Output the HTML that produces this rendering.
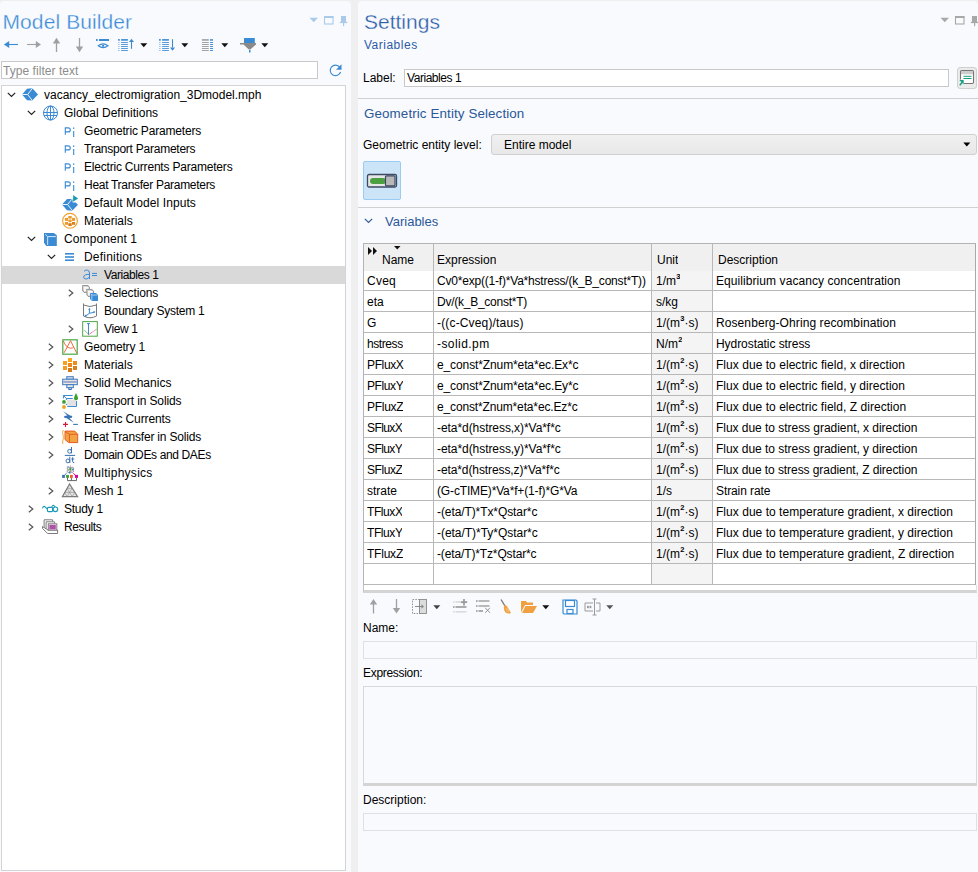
<!DOCTYPE html>
<html><head><meta charset="utf-8"><style>
*{box-sizing:border-box;margin:0;padding:0}
html,body{width:978px;height:872px;overflow:hidden;background:#efefef;font-family:"Liberation Sans",sans-serif;font-size:12px;color:#000}
.a{position:absolute;white-space:pre}
.panel{position:absolute;background:#f9fafd;border-top-left-radius:4px;border-top-right-radius:4px}
.t{position:absolute;white-space:pre;line-height:18px;height:18px}
svg{position:absolute;overflow:visible}
.c{position:absolute;white-space:pre;line-height:20px;height:20px;overflow:hidden}
.sp{position:relative;top:-6px;font-size:7.5px;margin-left:0.3px;font-weight:bold}
</style></head><body>

<!-- LEFT PANEL -->
<div class="panel" style="left:0;top:1px;width:351px;height:871px"></div>
<div class="a" style="left:2.5px;top:7px;font-size:21px;line-height:30px;color:#3b8ad6;letter-spacing:0.1px;-webkit-text-stroke:0.3px #f9fafd">Model Builder</div>
<div class="a" style="left:1px;top:61px;width:317px;height:18px;background:#fff;border:1px solid #c9c9c9"></div>
<div class="a" style="left:3px;top:62px;line-height:18px;color:#8c8c8c;letter-spacing:0.05px">Type filter text</div>
<div class="a" style="left:1px;top:85px;width:345px;height:786px;background:#fff;border:1px solid #d4d4d4"></div>
<div class="a" style="left:2px;top:266px;width:343px;height:18px;background:#d9d9d9"></div>
<svg style="left:7px;top:92px" width="9" height="6" viewBox="0 0 9 6" ><path d="M0.8 0.8 L4.5 4.5 L8.2 0.8" fill="none" stroke="#222" stroke-width="1.2"/></svg>
<svg style="left:22px;top:87px" width="16" height="16" viewBox="0 0 16 16" ><path d="M0 7.5 L5 1.8 L10.3 1.3 L16 7.6 L10.2 13.5 L5 13.2 Z" fill="#3a8ad4"/><path d="M0.3 7.5 L5.7 7.5 L10.5 1.2 M5.7 7.5 L10.3 13.6" stroke="#fff" stroke-width="0.9" fill="none"/></svg>
<div class="t" style="left:44px;top:86px">vacancy_electromigration_3Dmodel.mph</div>
<svg style="left:27px;top:110px" width="9" height="6" viewBox="0 0 9 6" ><path d="M0.8 0.8 L4.5 4.5 L8.2 0.8" fill="none" stroke="#222" stroke-width="1.2"/></svg>
<svg style="left:42px;top:105px" width="16" height="16" viewBox="0 0 16 16" ><g fill="none" stroke="#3a8ad4" stroke-width="1"><circle cx="8.5" cy="8" r="7"/><ellipse cx="8.5" cy="8" rx="3.5" ry="7"/><path d="M8.5 1v14M1.5 7.5h14M2 10.5h13"/></g></svg>
<div class="t" style="left:64px;top:104px">Global Definitions</div>
<svg style="left:62px;top:123px" width="16" height="16" viewBox="0 0 16 16" ><path d="M3.3 11.8 V4.9 H6 Q8.3 4.9 8.3 6.9 Q8.3 8.9 6 8.9 H3.3" fill="none" stroke="#3a8ad4" stroke-width="1.1"/><path d="M11.7 8 V14" stroke="#3a8ad4" stroke-width="1.1"/><rect x="11.15" y="4.4" width="1.1" height="1.6" fill="#3a8ad4"/></svg>
<div class="t" style="left:84px;top:122px;letter-spacing:-0.184px">Geometric Parameters</div>
<svg style="left:62px;top:141px" width="16" height="16" viewBox="0 0 16 16" ><path d="M3.3 11.8 V4.9 H6 Q8.3 4.9 8.3 6.9 Q8.3 8.9 6 8.9 H3.3" fill="none" stroke="#3a8ad4" stroke-width="1.1"/><path d="M11.7 8 V14" stroke="#3a8ad4" stroke-width="1.1"/><rect x="11.15" y="4.4" width="1.1" height="1.6" fill="#3a8ad4"/></svg>
<div class="t" style="left:84px;top:140px;letter-spacing:-0.247px">Transport Parameters</div>
<svg style="left:62px;top:159px" width="16" height="16" viewBox="0 0 16 16" ><path d="M3.3 11.8 V4.9 H6 Q8.3 4.9 8.3 6.9 Q8.3 8.9 6 8.9 H3.3" fill="none" stroke="#3a8ad4" stroke-width="1.1"/><path d="M11.7 8 V14" stroke="#3a8ad4" stroke-width="1.1"/><rect x="11.15" y="4.4" width="1.1" height="1.6" fill="#3a8ad4"/></svg>
<div class="t" style="left:84px;top:158px;letter-spacing:-0.200px">Electric Currents Parameters</div>
<svg style="left:62px;top:177px" width="16" height="16" viewBox="0 0 16 16" ><path d="M3.3 11.8 V4.9 H6 Q8.3 4.9 8.3 6.9 Q8.3 8.9 6 8.9 H3.3" fill="none" stroke="#3a8ad4" stroke-width="1.1"/><path d="M11.7 8 V14" stroke="#3a8ad4" stroke-width="1.1"/><rect x="11.15" y="4.4" width="1.1" height="1.6" fill="#3a8ad4"/></svg>
<div class="t" style="left:84px;top:176px;letter-spacing:-0.291px">Heat Transfer Parameters</div>
<svg style="left:62px;top:195px" width="16" height="16" viewBox="0 0 16 16" ><path d="M0 9.5 L5.1 4 L8.8 4 L10.6 4.6 L10.6 7.6 L13.6 7.6 L16 9.7 L10.2 15.7 L5 15.3 Z" fill="#3a8ad4"/><path d="M0.3 9.5 L5.6 9.5 L9.6 4.5 M5.6 9.5 L10.4 15.7" stroke="#fff" stroke-width="0.9" fill="none"/><path d="M11.1 0 L16.1 3.4 L11.1 6.7 Z" fill="#1a9ab0"/></svg>
<div class="t" style="left:84px;top:194px;letter-spacing:0.095px">Default Model Inputs</div>
<svg style="left:62px;top:213px" width="16" height="16" viewBox="0 0 16 16" ><circle cx="8" cy="7.8" r="7.4" fill="none" stroke="#f0a030" stroke-width="1.1"/><g fill="#ee9a2a"><rect x="6.3" y="3" width="3.4" height="2.6"/><rect x="2.9" y="4.9" width="3.1" height="3"/><rect x="10" y="4.9" width="3.1" height="3"/><rect x="6.3" y="6.6" width="3.4" height="2.6" rx="1"/><rect x="2.9" y="9" width="3.1" height="2.8"/></g><rect x="10" y="9" width="3.1" height="2.8" fill="#dc8018"/><rect x="6.3" y="10.2" width="3.4" height="2.9" fill="#d87a14"/></svg>
<div class="t" style="left:84px;top:212px">Materials</div>
<svg style="left:27px;top:236px" width="9" height="6" viewBox="0 0 9 6" ><path d="M0.8 0.8 L4.5 4.5 L8.2 0.8" fill="none" stroke="#222" stroke-width="1.2"/></svg>
<svg style="left:42px;top:231px" width="16" height="16" viewBox="0 0 16 16" ><path d="M2 1.9 L11.8 1.9 L14.8 4.2 L14.8 14.9 L4.3 14.9 L2 11.8 Z" fill="#3a8ad4"/><path d="M3.3 3.2 L5.65 5.6 L13.9 5.6 M5.65 5.6 L5.65 13.9" stroke="#e8eef8" stroke-width="0.9" fill="none"/></svg>
<div class="t" style="left:64px;top:230px;letter-spacing:0.100px">Component 1</div>
<svg style="left:47px;top:254px" width="9" height="6" viewBox="0 0 9 6" ><path d="M0.8 0.8 L4.5 4.5 L8.2 0.8" fill="none" stroke="#222" stroke-width="1.2"/></svg>
<svg style="left:62px;top:249px" width="16" height="16" viewBox="0 0 16 16" ><g fill="#3a8ad4"><rect x="3" y="4" width="9" height="1.6"/><rect x="3" y="7.2" width="9" height="1.6"/><rect x="3" y="10.4" width="9" height="1.6"/></g></svg>
<div class="t" style="left:84px;top:248px;letter-spacing:0.200px">Definitions</div>
<svg style="left:82px;top:267px" width="16" height="16" viewBox="0 0 16 16" ><path d="M2 4.3 Q3.5 2.9 5.3 3.1 Q7.5 3.4 7.5 6 V12" fill="none" stroke="#3a8ad4" stroke-width="1"/><path d="M7.4 7.4 Q2.3 7.2 1.6 9.8 Q1.6 12.1 4.2 12 Q6.6 11.9 7.4 9.8" fill="none" stroke="#3a8ad4" stroke-width="1"/><path d="M10 6.4 h5 M10 8.5 h5" stroke="#3a8ad4" stroke-width="1"/></svg>
<div class="t" style="left:104px;top:266px;letter-spacing:-0.420px">Variables 1</div>
<svg style="left:68px;top:289px" width="6" height="8" viewBox="0 0 6 8" ><path d="M0.8 0.8 L4.8 4 L0.8 7.2" fill="none" stroke="#555" stroke-width="1.2"/></svg>
<svg style="left:82px;top:285px" width="16" height="16" viewBox="0 0 16 16" ><g transform="translate(0,0)"><path d="M0.7 0.7 L5.6 0.7 L7.3 2.4 L7.3 7.3 L2.4 7.3 L0.7 5.6 Z" fill="#eeeeee" stroke="#999" stroke-width="1.2"/><path d="M1.5 1.5 L2.6 2.6 L6.8 2.6 M2.6 2.6 L2.6 6.8" stroke="#fff" stroke-width="0.7" fill="none"/></g><g transform="translate(4.2,4)"><path d="M0.7 0.7 L5.6 0.7 L7.3 2.4 L7.3 7.3 L2.4 7.3 L0.7 5.6 Z" fill="#eeeeee" stroke="#999" stroke-width="1.2"/><path d="M1.5 1.5 L2.6 2.6 L6.8 2.6 M2.6 2.6 L2.6 6.8" stroke="#fff" stroke-width="0.7" fill="none"/></g><path d="M8 8 L14 8 L16 10 L16 16 L10 16 L8 14 Z" fill="#3a8ad4"/><path d="M8.6 8.6 L9.8 10 L15.5 10 M9.8 10 L9.8 15.6" stroke="#c8dcf4" stroke-width="0.8" fill="none"/></svg>
<div class="t" style="left:104px;top:284px;letter-spacing:-0.111px">Selections</div>
<svg style="left:82px;top:303px" width="16" height="16" viewBox="0 0 16 16" ><path d="M1.5 0.5 V13 Q8 16.6 14.5 13 V0.5" fill="none" stroke="#7a7a7a" stroke-width="1"/><path d="M1.5 2 Q8 5 14.5 2" fill="none" stroke="#7a7a7a" stroke-width="1"/><path d="M7.4 6 V10.3 L12.5 9.2 M7.4 10.3 L3.6 13" fill="none" stroke="#3a8ad4" stroke-width="1"/><path d="M6.2 6.8 L7.4 4.8 L8.6 6.8Z M11.2 8 L13.5 8.7 L11.9 10.3Z M2.8 11.2 L3 14 L5.4 13Z" fill="#3a8ad4"/></svg>
<div class="t" style="left:104px;top:302px;letter-spacing:-0.250px">Boundary System 1</div>
<svg style="left:68px;top:325px" width="6" height="8" viewBox="0 0 6 8" ><path d="M0.8 0.8 L4.8 4 L0.8 7.2" fill="none" stroke="#555" stroke-width="1.2"/></svg>
<svg style="left:82px;top:321px" width="16" height="16" viewBox="0 0 16 16" ><rect x="0.7" y="0.6" width="14.6" height="14.6" fill="none" stroke="#4aa844" stroke-width="1"/><path d="M6.5 2.5 V13.8 M5 2.6 h3" stroke="#3a8ad4" stroke-width="1"/><path d="M6.7 13.6 L14.5 8.2" stroke="#e0407a" stroke-width="0.9" stroke-dasharray="1 0.5"/><path d="M2.3 9 L6.5 13.5" stroke="#4aa844" stroke-width="0.9" stroke-dasharray="1 0.5"/></svg>
<div class="t" style="left:104px;top:320px;letter-spacing:-0.400px">View 1</div>
<svg style="left:48px;top:343px" width="6" height="8" viewBox="0 0 6 8" ><path d="M0.8 0.8 L4.8 4 L0.8 7.2" fill="none" stroke="#555" stroke-width="1.2"/></svg>
<svg style="left:62px;top:339px" width="16" height="16" viewBox="0 0 16 16" ><rect x="0.8" y="0.8" width="14.4" height="14.4" fill="none" stroke="#4aa844" stroke-width="1.2"/><path d="M2.1 13.8 L8.55 1.7 L14.7 14" fill="none" stroke="#e85a2a" stroke-width="0.9"/><path d="M1.4 1.9 Q3.5 8.2 8.3 9.2 Q10.3 9.4 11.5 8.2" fill="none" stroke="#e85a2a" stroke-width="0.9"/></svg>
<div class="t" style="left:84px;top:338px;letter-spacing:-0.178px">Geometry 1</div>
<svg style="left:48px;top:361px" width="6" height="8" viewBox="0 0 6 8" ><path d="M0.8 0.8 L4.8 4 L0.8 7.2" fill="none" stroke="#555" stroke-width="1.2"/></svg>
<svg style="left:62px;top:357px" width="16" height="16" viewBox="0 0 16 16" ><rect x="6" y="1" width="4" height="4" fill="#f8a81c"/><rect x="1" y="4" width="4" height="4" fill="#f8a01c"/><rect x="11" y="4" width="4" height="4" fill="#ee8c1c"/><rect x="6" y="6" width="4" height="4" fill="#ef8a1a"/><rect x="1" y="9" width="4" height="4" fill="#f39a25"/><rect x="11" y="9" width="4" height="4" fill="#d98020"/><rect x="6" y="11" width="4" height="4" fill="#d57a1a"/></svg>
<div class="t" style="left:84px;top:356px">Materials</div>
<svg style="left:48px;top:379px" width="6" height="8" viewBox="0 0 6 8" ><path d="M0.8 0.8 L4.8 4 L0.8 7.2" fill="none" stroke="#555" stroke-width="1.2"/></svg>
<svg style="left:62px;top:375px" width="16" height="16" viewBox="0 0 16 16" ><g fill="#ece8e4" stroke="#3a78c0" stroke-width="1"><rect x="4.8" y="1.7" width="6.5" height="2.5"/><rect x="0.7" y="4.2" width="14.6" height="5.5"/><rect x="4.8" y="9.7" width="6.5" height="3"/><rect x="6.8" y="12.7" width="2.5" height="1.8"/></g><rect x="1.2" y="5.9" width="13.6" height="2" fill="#9aaad0"/></svg>
<div class="t" style="left:84px;top:374px">Solid Mechanics</div>
<svg style="left:48px;top:397px" width="6" height="8" viewBox="0 0 6 8" ><path d="M0.8 0.8 L4.8 4 L0.8 7.2" fill="none" stroke="#555" stroke-width="1.2"/></svg>
<svg style="left:62px;top:393px" width="16" height="16" viewBox="0 0 16 16" ><rect x="5.1" y="6.5" width="8.9" height="6.4" fill="#e2e2e2"/><path d="M1.4 5.5 V2.5 H10.7 M1.6 2.6 L4.4 5.5 H10.7 M4.4 5.5 V7 M14.5 8 V13.5 H5.3" fill="none" stroke="#3a8ad4" stroke-width="1"/><circle cx="4.5" cy="11.4" r="0.7" fill="#3a8ad4"/><circle cx="2" cy="8.9" r="1.9" fill="#3aa030"/><circle cx="2" cy="14" r="1.9" fill="#f0a020"/><path d="M14 0 Q16 3.8 16 5.2 A2 2 0 0 1 12 5.2 Q12 3.8 14 0Z" fill="#3aa030"/></svg>
<div class="t" style="left:84px;top:392px;letter-spacing:-0.111px">Transport in Solids</div>
<svg style="left:48px;top:415px" width="6" height="8" viewBox="0 0 6 8" ><path d="M0.8 0.8 L4.8 4 L0.8 7.2" fill="none" stroke="#555" stroke-width="1.2"/></svg>
<svg style="left:62px;top:411px" width="16" height="16" viewBox="0 0 16 16" ><path d="M1.3 0.2 L7.5 4.3 L10.2 5 L10 6.7 L7.5 7 L11.8 11.7 L4.8 7.2 L2.3 6.7 L2.2 4.9 L5.3 4.6 Z" fill="#3a74b8"/><path d="M1 13.4 h5 M3.5 10.9 v5" stroke="#d0183c" stroke-width="1.1"/><path d="M11.2 13.4 h4.7" stroke="#3a74b8" stroke-width="1.1"/></svg>
<div class="t" style="left:84px;top:410px;letter-spacing:-0.125px">Electric Currents</div>
<svg style="left:48px;top:433px" width="6" height="8" viewBox="0 0 6 8" ><path d="M0.8 0.8 L4.8 4 L0.8 7.2" fill="none" stroke="#555" stroke-width="1.2"/></svg>
<svg style="left:62px;top:429px" width="16" height="16" viewBox="0 0 16 16" ><path d="M1.3 1 Q0 3.5 1 6 Q2 8.5 1 11 Q0.4 13 0.8 15" fill="none" stroke="#f0a030" stroke-width="0.9"/><path d="M3 2.1 L12.7 2.1 L15.7 5.3 V13.6 H6.7 L3 10.6 Z" fill="#f0a444" stroke="#e85a20" stroke-width="1"/><path d="M3.5 2.6 L7.4 5.3 H15.5 M7.4 5.3 V13.4" fill="none" stroke="#e85a20" stroke-width="1"/></svg>
<div class="t" style="left:84px;top:428px;letter-spacing:-0.191px">Heat Transfer in Solids</div>
<svg style="left:48px;top:451px" width="6" height="8" viewBox="0 0 6 8" ><path d="M0.8 0.8 L4.8 4 L0.8 7.2" fill="none" stroke="#555" stroke-width="1.2"/></svg>
<svg style="left:62px;top:447px" width="16" height="16" viewBox="0 0 16 16" ><g fill="none" stroke="#3a6fb0" stroke-width="1"><circle cx="7.6" cy="4.3" r="1.9"/><path d="M9.5 0 V6.3"/><path d="M2.8 8.4 H13.1"/><circle cx="5.9" cy="13.9" r="1.9"/><path d="M7.8 9.7 V15.9"/><path d="M10.6 10.3 V14.6 Q10.6 15.6 12.2 15.6 M9.3 12 H12.2"/></g></svg>
<div class="t" style="left:84px;top:446px;letter-spacing:-0.363px">Domain ODEs and DAEs</div>
<svg style="left:62px;top:465px" width="16" height="16" viewBox="0 0 16 16" ><g fill="none" stroke="#9a9a9a" stroke-width="0.9"><ellipse cx="8.3" cy="4.8" rx="3.8" ry="1.6" transform="rotate(35 8.3 4.8)"/><ellipse cx="8.3" cy="4.8" rx="3.8" ry="1.6" transform="rotate(-35 8.3 4.8)"/><path d="M8.3 0.5 V8.5"/></g><circle cx="8.3" cy="4.3" r="1.1" fill="#3aa030"/><circle cx="6" cy="1.8" r="0.9" fill="#7aaee0"/><circle cx="11" cy="4.3" r="0.9" fill="#3a78c0"/><circle cx="7.5" cy="7.6" r="0.9" fill="#3a78c0"/><path d="M2.6 10 L4.6 8.2" stroke="#3a70b8" stroke-width="1"/><path d="M11.4 8.2 L13.5 10.3" stroke="#e000a0" stroke-width="1"/><rect x="0.1" y="9.9" width="2.8" height="3" fill="#3a70b8"/><rect x="4.1" y="9.9" width="2.8" height="3" fill="#3aa030"/><rect x="8" y="9.9" width="2.8" height="3" fill="#e86030"/><rect x="13" y="9.9" width="3" height="3" fill="#e000a0"/><path d="M5.5 12.9 V15.6 H14.5 V12.9 M9.4 12.9 V15.6" fill="none" stroke="#666" stroke-width="1"/></svg>
<div class="t" style="left:84px;top:464px;letter-spacing:0.273px">Multiphysics</div>
<svg style="left:48px;top:487px" width="6" height="8" viewBox="0 0 6 8" ><path d="M0.8 0.8 L4.8 4 L0.8 7.2" fill="none" stroke="#555" stroke-width="1.2"/></svg>
<svg style="left:62px;top:483px" width="16" height="16" viewBox="0 0 16 16" ><path d="M7.6 1 L15.6 13.6 L0.4 13.6 Z" fill="#e6e6e6" stroke="#7a7a7a" stroke-width="1.2"/><path d="M5 5.3 H10.2 M2.6 9.4 H12.8 M5 5.3 L7.6 9.4 L10.2 5.3 M2.6 9.4 L5.2 13.5 L7.6 9.4 L10.1 13.5 L12.8 9.4" fill="none" stroke="#8a8a8a" stroke-width="0.6"/></svg>
<div class="t" style="left:84px;top:482px">Mesh 1</div>
<svg style="left:28px;top:505px" width="6" height="8" viewBox="0 0 6 8" ><path d="M0.8 0.8 L4.8 4 L0.8 7.2" fill="none" stroke="#555" stroke-width="1.2"/></svg>
<svg style="left:42px;top:501px" width="16" height="16" viewBox="0 0 16 16" ><g fill="none" stroke="#1a9ab4" stroke-width="1.1"><path d="M0.4 7.4 Q1.6 4.3 3.2 6 Q4.2 7.4 5.4 8"/><rect x="5.4" y="6.4" width="5.2" height="4.2" rx="1"/><circle cx="13.4" cy="8.3" r="2.3"/><path d="M9.8 6.3 Q10 4.2 11.6 4.3 L13.2 5.9"/></g></svg>
<div class="t" style="left:64px;top:500px;letter-spacing:-0.267px">Study 1</div>
<svg style="left:28px;top:523px" width="6" height="8" viewBox="0 0 6 8" ><path d="M0.8 0.8 L4.8 4 L0.8 7.2" fill="none" stroke="#555" stroke-width="1.2"/></svg>
<svg style="left:42px;top:519px" width="16" height="16" viewBox="0 0 16 16" ><g fill="#fff" stroke="#7a7a7a" stroke-width="1"><path d="M2.1 9 V0.8 H10.6 V2.5"/><path d="M4.1 10 V2.8 H12.6 V4.6"/><path d="M0.5 7.5 V9.5 L5.7 14.5 H15.6 V11 H6 Z"/><rect x="6.3" y="4.8" width="8.5" height="6.3"/></g><rect x="7.3" y="5.8" width="6.5" height="4.6" fill="#b050a8"/></svg>
<div class="t" style="left:64px;top:518px;letter-spacing:-0.367px">Results</div>

<!-- RIGHT PANEL -->
<div class="panel" style="left:358px;top:1px;width:620px;height:871px"></div>
<div class="a" style="left:364px;top:7px;font-size:21px;line-height:30px;color:#2b5ca8;-webkit-text-stroke:0.3px #f9fafd">Settings</div>
<div class="a" style="left:364px;top:36px;line-height:18px;color:#2b5ca8;letter-spacing:0.5px">Variables</div>

<div class="a" style="left:363px;top:69px;line-height:18px">Label:</div>
<div class="a" style="left:404px;top:69px;width:545px;height:18px;background:#fff;border:1px solid #c8c8c8"></div>
<div class="a" style="left:407px;top:69px;line-height:18px;letter-spacing:-0.45px">Variables 1</div>
<div class="a" style="left:358px;top:98px;width:620px;height:1px;background:#d0d0d0"></div>

<div class="a" style="left:364px;top:105px;font-size:13.4px;line-height:18px;color:#2a5898;letter-spacing:0.1px">Geometric Entity Selection</div>
<div class="a" style="left:363px;top:136px;line-height:18px">Geometric entity level:</div>
<div class="a" style="left:491px;top:134px;width:486px;height:21px;background:linear-gradient(#f0f0f0,#e8e8e8);border:1px solid #cfcfcf;border-radius:3px"></div>
<div class="a" style="left:504px;top:136px;line-height:18px">Entire model</div>
<div class="a" style="left:363px;top:161px;width:38px;height:39px;background:#cce4f7;border:1px solid #99ccf5;border-radius:2px"></div>
<div class="a" style="left:358px;top:207px;width:620px;height:1px;background:#d0d0d0"></div>
<div class="a" style="left:385px;top:213px;font-size:13px;line-height:18px;color:#2a5898">Variables</div>

<div class="a" style="left:363px;top:585px;width:614px;height:8px;background:#fff;border:1px solid #e2e2e2;border-left-color:#c0c0c0;border-top:0;border-bottom:3px solid #d4d4d4"></div>
<div class="a" style="left:363px;top:243px;width:613px;height:342px;background:#fff;border:1px solid #b4b4b4;border-right-color:#a8a8a8;border-bottom:0"></div>
<div class="a" style="left:364px;top:244px;width:611px;height:27px;background:#f0f0f0"></div>
<div class="a" style="left:652px;top:271px;width:60px;height:313px;background:#f4f4f4"></div>
<div class="a" style="left:364px;top:290px;width:611px;height:1px;background:#b8b8b8"></div>
<div class="a" style="left:364px;top:311px;width:611px;height:1px;background:#b8b8b8"></div>
<div class="a" style="left:364px;top:332px;width:611px;height:1px;background:#b8b8b8"></div>
<div class="a" style="left:364px;top:353px;width:611px;height:1px;background:#b8b8b8"></div>
<div class="a" style="left:364px;top:374px;width:611px;height:1px;background:#b8b8b8"></div>
<div class="a" style="left:364px;top:395px;width:611px;height:1px;background:#b8b8b8"></div>
<div class="a" style="left:364px;top:416px;width:611px;height:1px;background:#b8b8b8"></div>
<div class="a" style="left:364px;top:437px;width:611px;height:1px;background:#b8b8b8"></div>
<div class="a" style="left:364px;top:458px;width:611px;height:1px;background:#b8b8b8"></div>
<div class="a" style="left:364px;top:479px;width:611px;height:1px;background:#b8b8b8"></div>
<div class="a" style="left:364px;top:500px;width:611px;height:1px;background:#b8b8b8"></div>
<div class="a" style="left:364px;top:521px;width:611px;height:1px;background:#b8b8b8"></div>
<div class="a" style="left:364px;top:542px;width:611px;height:1px;background:#b8b8b8"></div>
<div class="a" style="left:364px;top:563px;width:611px;height:1px;background:#b8b8b8"></div>
<div class="a" style="left:364px;top:584px;width:611px;height:1px;background:#b8b8b8"></div>
<div class="a" style="left:433px;top:244px;width:1px;height:340px;background:#b8b8b8"></div>
<div class="a" style="left:651px;top:244px;width:1px;height:340px;background:#b8b8b8"></div>
<div class="a" style="left:712px;top:244px;width:1px;height:340px;background:#b8b8b8"></div>
<div class="c" style="left:382px;top:250px">Name</div>
<div class="c" style="left:437px;top:250px">Expression</div>
<div class="c" style="left:657px;top:250px">Unit</div>
<div class="c" style="left:718px;top:250px">Description</div>
<svg style="left:368px;top:247px" width="10" height="8" viewBox="0 0 10 8" ><path d="M0 0 L4 4 L0 8Z M5 0 L9 4 L5 8Z" fill="#111"/></svg>
<svg style="left:394px;top:246px" width="7" height="4" viewBox="0 0 7 4" ><path d="M0 0 L6.5 0 L3.25 3.5Z" fill="#111"/></svg>
<div class="c" style="left:367px;top:271px;letter-spacing:0.233px">Cveq</div>
<div class="c" style="left:437px;top:271px;width:213px;letter-spacing:-0.200px">Cv0*exp((1-f)*Va*hstress/(k_B_const*T))</div>
<div class="c" style="left:656px;top:271px">1/m<span class="sp">3</span></div>
<div class="c" style="left:716px;top:271px;width:258px;letter-spacing:0.075px">Equilibrium vacancy concentration</div>
<div class="c" style="left:367px;top:292px">eta</div>
<div class="c" style="left:437px;top:292px;width:213px;letter-spacing:-0.253px">Dv/(k_B_const*T)</div>
<div class="c" style="left:656px;top:292px">s/kg</div>
<div class="c" style="left:716px;top:292px;width:258px"></div>
<div class="c" style="left:367px;top:313px">G</div>
<div class="c" style="left:437px;top:313px;width:213px;letter-spacing:0.160px">-((c-Cveq)/taus)</div>
<div class="c" style="left:656px;top:313px">1/(m<span class="sp">3</span>·s)</div>
<div class="c" style="left:716px;top:313px;width:258px;letter-spacing:0.090px">Rosenberg-Ohring recombination</div>
<div class="c" style="left:367px;top:334px;letter-spacing:-0.417px">hstress</div>
<div class="c" style="left:437px;top:334px;width:213px;letter-spacing:0.438px">-solid.pm</div>
<div class="c" style="left:656px;top:334px">N/m<span class="sp">2</span></div>
<div class="c" style="left:716px;top:334px;width:258px;letter-spacing:-0.059px">Hydrostatic stress</div>
<div class="c" style="left:367px;top:355px;letter-spacing:-0.360px">PFluxX</div>
<div class="c" style="left:437px;top:355px;width:213px;letter-spacing:-0.113px">e_const*Znum*eta*ec.Ex*c</div>
<div class="c" style="left:656px;top:355px">1/(m<span class="sp">2</span>·s)</div>
<div class="c" style="left:716px;top:355px;width:258px;letter-spacing:0.042px">Flux due to electric field, x direction</div>
<div class="c" style="left:367px;top:376px;letter-spacing:-0.400px">PFluxY</div>
<div class="c" style="left:437px;top:376px;width:213px;letter-spacing:-0.113px">e_const*Znum*eta*ec.Ey*c</div>
<div class="c" style="left:656px;top:376px">1/(m<span class="sp">2</span>·s)</div>
<div class="c" style="left:716px;top:376px;width:258px;letter-spacing:0.042px">Flux due to electric field, y direction</div>
<div class="c" style="left:367px;top:397px;letter-spacing:-0.280px">PFluxZ</div>
<div class="c" style="left:437px;top:397px;width:213px;letter-spacing:-0.148px">e_const*Znum*eta*ec.Ez*c</div>
<div class="c" style="left:656px;top:397px">1/(m<span class="sp">2</span>·s)</div>
<div class="c" style="left:716px;top:397px;width:258px;letter-spacing:0.037px">Flux due to electric field, Z direction</div>
<div class="c" style="left:367px;top:418px;letter-spacing:-0.600px">SFluxX</div>
<div class="c" style="left:437px;top:418px;width:213px;letter-spacing:-0.061px">-eta*d(hstress,x)*Va*f*c</div>
<div class="c" style="left:656px;top:418px">1/(m<span class="sp">2</span>·s)</div>
<div class="c" style="left:716px;top:418px;width:258px;letter-spacing:-0.036px">Flux due to stress gradient, x direction</div>
<div class="c" style="left:367px;top:439px;letter-spacing:-0.600px">SFluxY</div>
<div class="c" style="left:437px;top:439px;width:213px;letter-spacing:-0.061px">-eta*d(hstress,y)*Va*f*c</div>
<div class="c" style="left:656px;top:439px">1/(m<span class="sp">2</span>·s)</div>
<div class="c" style="left:716px;top:439px;width:258px;letter-spacing:-0.036px">Flux due to stress gradient, y direction</div>
<div class="c" style="left:367px;top:460px;letter-spacing:-0.420px">SFluxZ</div>
<div class="c" style="left:437px;top:460px;width:213px;letter-spacing:-0.100px">-eta*d(hstress,z)*Va*f*c</div>
<div class="c" style="left:656px;top:460px">1/(m<span class="sp">2</span>·s)</div>
<div class="c" style="left:716px;top:460px;width:258px;letter-spacing:-0.067px">Flux due to stress gradient, Z direction</div>
<div class="c" style="left:367px;top:481px">strate</div>
<div class="c" style="left:437px;top:481px;width:213px;letter-spacing:-0.150px">(G-cTIME)*Va*f+(1-f)*G*Va</div>
<div class="c" style="left:656px;top:481px">1/s</div>
<div class="c" style="left:716px;top:481px;width:258px;letter-spacing:-0.100px">Strain rate</div>
<div class="c" style="left:367px;top:502px;letter-spacing:-0.420px">TFluxX</div>
<div class="c" style="left:437px;top:502px;width:213px;letter-spacing:-0.089px">-(eta/T)*Tx*Qstar*c</div>
<div class="c" style="left:656px;top:502px">1/(m<span class="sp">2</span>·s)</div>
<div class="c" style="left:716px;top:502px;width:258px;letter-spacing:0.034px">Flux due to temperature gradient, x direction</div>
<div class="c" style="left:367px;top:523px;letter-spacing:-0.420px">TFluxY</div>
<div class="c" style="left:437px;top:523px;width:213px;letter-spacing:-0.033px">-(eta/T)*Ty*Qstar*c</div>
<div class="c" style="left:656px;top:523px">1/(m<span class="sp">2</span>·s)</div>
<div class="c" style="left:716px;top:523px;width:258px;letter-spacing:0.034px">Flux due to temperature gradient, y direction</div>
<div class="c" style="left:367px;top:544px;letter-spacing:-0.220px">TFluxZ</div>
<div class="c" style="left:437px;top:544px;width:213px;letter-spacing:-0.133px">-(eta/T)*Tz*Qstar*c</div>
<div class="c" style="left:656px;top:544px">1/(m<span class="sp">2</span>·s)</div>
<div class="c" style="left:716px;top:544px;width:258px;letter-spacing:0.034px">Flux due to temperature gradient, Z direction</div>
<svg style="left:309px;top:17px" width="10" height="6" viewBox="0 0 10 6" ><path d="M0.5 0.8 L9 0.8 L4.75 5.2Z" fill="#a9cbe9"/></svg>
<svg style="left:323px;top:15px" width="11" height="10" viewBox="0 0 11 10" ><rect x="1.5" y="2" width="8.5" height="7" fill="none" stroke="#a9cbe9" stroke-width="1.1"/><rect x="1" y="1" width="9.5" height="2" fill="#a9cbe9"/></svg>
<svg style="left:339px;top:15px" width="9" height="12" viewBox="0 0 9 12" ><rect x="2" y="1" width="5" height="6.5" fill="#a9cbe9"/><rect x="0.8" y="6.8" width="7.5" height="1.3" fill="#a9cbe9"/><rect x="4" y="8" width="1.2" height="3.2" fill="#a9cbe9"/></svg>
<svg style="left:940px;top:17px" width="10" height="6" viewBox="0 0 10 6" ><path d="M0.5 0.8 L9 0.8 L4.75 5.2Z" fill="#a8a8a8"/></svg>
<svg style="left:954px;top:15px" width="11" height="10" viewBox="0 0 11 10" ><rect x="1.5" y="2" width="8.5" height="7" fill="none" stroke="#a8a8a8" stroke-width="1.1"/><rect x="1" y="1" width="9.5" height="2" fill="#a8a8a8"/></svg>
<svg style="left:970px;top:15px" width="9" height="12" viewBox="0 0 9 12" ><rect x="2" y="1" width="5" height="6.5" fill="#a8a8a8"/><rect x="0.8" y="6.8" width="7.5" height="1.3" fill="#a8a8a8"/><rect x="4" y="8" width="1.2" height="3.2" fill="#a8a8a8"/></svg>
<svg style="left:3px;top:37px" width="16" height="14" viewBox="0 0 16 14" ><path d="M5 7.5 L15 7.5" stroke="#3a8ad4" stroke-width="1.1"/><path d="M0.9 7.5 L6.2 4 L6.2 11Z" fill="#3a8ad4"/></svg>
<svg style="left:26px;top:37px" width="16" height="14" viewBox="0 0 16 14" ><path d="M1 7.5 L11 7.5" stroke="#a0a0a0" stroke-width="1.1"/><path d="M15 7.5 L9.8 4 L9.8 11Z" fill="#a0a0a0"/></svg>
<svg style="left:52px;top:37px" width="9" height="16" viewBox="0 0 9 16" ><path d="M4.5 4 L4.5 15" stroke="#a0a0a0" stroke-width="1.3"/><path d="M4.5 0.8 L8.2 6.5 L0.8 6.5Z" fill="#a0a0a0"/></svg>
<svg style="left:75px;top:37px" width="9" height="16" viewBox="0 0 9 16" ><path d="M4.5 1 L4.5 12" stroke="#a0a0a0" stroke-width="1.3"/><path d="M4.5 15.2 L8.2 9.5 L0.8 9.5Z" fill="#a0a0a0"/></svg>
<svg style="left:95px;top:37px" width="15" height="12" viewBox="0 0 15 12" ><rect x="1" y="2" width="1.6" height="2" fill="#3a8ad4"/><rect x="4" y="2" width="10" height="2" fill="#3a8ad4"/><path d="M3.3 8.8 Q8.1 5 12.9 8.8 Q8.1 12.5 3.3 8.8Z" fill="none" stroke="#3a8ad4" stroke-width="1.2"/><circle cx="8.1" cy="8.8" r="1.1" fill="#3a8ad4"/></svg>
<svg style="left:117px;top:38px" width="17" height="14" viewBox="0 0 17 14" ><rect x="1" y="1.1" width="1.8" height="1.6" fill="#3a8ad4"/><rect x="4.1" y="1.1" width="6.8" height="1.6" fill="#3a8ad4"/><rect x="1.4" y="4.1" width="1" height="0.9" fill="#5a9ad8"/><rect x="4.1" y="4.1" width="6.8" height="0.9" fill="#4a92d6"/><rect x="1.4" y="6.1" width="1" height="0.9" fill="#5a9ad8"/><rect x="4.1" y="6.1" width="6.8" height="0.9" fill="#4a92d6"/><rect x="1.4" y="8.1" width="1" height="0.9" fill="#5a9ad8"/><rect x="4.1" y="8.1" width="6.8" height="0.9" fill="#4a92d6"/><rect x="1.4" y="10.1" width="1" height="0.9" fill="#5a9ad8"/><rect x="4.1" y="10.1" width="6.8" height="0.9" fill="#4a92d6"/><rect x="1.4" y="12.1" width="1" height="0.9" fill="#5a9ad8"/><rect x="4.1" y="12.1" width="6.8" height="0.9" fill="#4a92d6"/><path d="M14.5 3.5 L14.5 10.8" stroke="#3a8ad4" stroke-width="1.1"/><path d="M14.5 0.8 L17 4 L12 4Z" fill="#3a8ad4"/></svg>
<svg style="left:158px;top:38px" width="17" height="14" viewBox="0 0 17 14" ><rect x="1" y="1.1" width="1.8" height="1.6" fill="#3a8ad4"/><rect x="4.1" y="1.1" width="6.8" height="1.6" fill="#3a8ad4"/><rect x="1.4" y="4.1" width="1" height="0.9" fill="#5a9ad8"/><rect x="4.1" y="4.1" width="6.8" height="0.9" fill="#4a92d6"/><rect x="1.4" y="6.1" width="1" height="0.9" fill="#5a9ad8"/><rect x="4.1" y="6.1" width="6.8" height="0.9" fill="#4a92d6"/><rect x="1.4" y="8.1" width="1" height="0.9" fill="#5a9ad8"/><rect x="4.1" y="8.1" width="6.8" height="0.9" fill="#4a92d6"/><rect x="1.4" y="10.1" width="1" height="0.9" fill="#5a9ad8"/><rect x="4.1" y="10.1" width="6.8" height="0.9" fill="#4a92d6"/><rect x="1.4" y="12.1" width="1" height="0.9" fill="#5a9ad8"/><rect x="4.1" y="12.1" width="6.8" height="0.9" fill="#4a92d6"/><path d="M14.5 1.2 L14.5 9.5" stroke="#3a8ad4" stroke-width="1.1"/><path d="M14.5 12.8 L17 9.6 L12 9.6Z" fill="#3a8ad4"/></svg>
<svg style="left:140px;top:43px" width="8" height="5" viewBox="0 0 8 5" ><path d="M0.3 0.3 L7.3 0.3 L3.8 4.3Z" fill="#111"/></svg>
<svg style="left:181px;top:43px" width="8" height="5" viewBox="0 0 8 5" ><path d="M0.3 0.3 L7.3 0.3 L3.8 4.3Z" fill="#111"/></svg>
<svg style="left:221px;top:43px" width="8" height="5" viewBox="0 0 8 5" ><path d="M0.3 0.3 L7.3 0.3 L3.8 4.3Z" fill="#111"/></svg>
<svg style="left:261px;top:43px" width="8" height="5" viewBox="0 0 8 5" ><path d="M0.3 0.3 L7.3 0.3 L3.8 4.3Z" fill="#111"/></svg>
<svg style="left:201px;top:38px" width="13" height="14" viewBox="0 0 13 14" ><rect x="0.9" y="1.2" width="6.9" height="1.5" fill="#9a9a9a"/><rect x="9" y="1.2" width="3" height="1.5" fill="#3a8ad4"/><rect x="0.9" y="4.1" width="6.9" height="0.9" fill="#9a9a9a"/><rect x="9" y="4.1" width="3" height="0.9" fill="#3a8ad4"/><rect x="0.9" y="6.1" width="6.9" height="0.9" fill="#9a9a9a"/><rect x="9" y="6.1" width="3" height="0.9" fill="#3a8ad4"/><rect x="0.9" y="8.1" width="6.9" height="0.9" fill="#9a9a9a"/><rect x="9" y="8.1" width="3" height="0.9" fill="#3a8ad4"/><rect x="0.9" y="10.1" width="6.9" height="0.9" fill="#9a9a9a"/><rect x="9" y="10.1" width="3" height="0.9" fill="#3a8ad4"/><rect x="0.9" y="12.1" width="6.9" height="0.9" fill="#9a9a9a"/><rect x="9" y="12.1" width="3" height="0.9" fill="#3a8ad4"/></svg>
<svg style="left:240px;top:37px" width="17" height="17" viewBox="0 0 17 17" ><rect x="4" y="1" width="10.8" height="5" fill="#3a8ad4"/><path d="M0 6 L16 6 L16 7.5 L10.3 12.5 L8.8 12.5 L3.5 7.5 L0 7.5Z" fill="#8a8a8a"/><rect x="9" y="13" width="1.5" height="2.5" fill="#3a8ad4"/></svg>
<svg style="left:328px;top:63px" width="15" height="15" viewBox="0 0 15 15" ><path d="M11.8 4.2 A5.3 5.3 0 1 0 12.6 9" fill="none" stroke="#3a8ad4" stroke-width="1.15"/><path d="M13.5 1.2 L13.5 6.8 L8 6.8Z" fill="#3a8ad4"/></svg>
<div class="a" style="left:957px;top:67px;width:20px;height:22px;background:#ebebeb;border:1px solid #d0d0d0;border-radius:3px"></div>
<svg style="left:959px;top:69px" width="16" height="17" viewBox="0 0 16 17" ><rect x="1.5" y="1.5" width="13" height="13" rx="1.2" fill="#fff" stroke="#777" stroke-width="1.1"/><rect x="2" y="2" width="12" height="3.3" fill="#cdcdcd"/><path d="M4.5 7.3 h8 M4.5 9.5 h8" stroke="#18a080" stroke-width="1"/><path d="M0 10.5 L5 10.5 L5 15.5 L0 15.5Z" fill="#ebebeb"/><path d="M0.3 11 L4.6 11 L4.6 15.3Z" fill="#18a080"/><path d="M0.8 16.2 L3.2 13.2" stroke="#18a080" stroke-width="1.4"/></svg>
<svg style="left:963px;top:142px" width="8" height="5" viewBox="0 0 8 5" ><path d="M0.3 0.5 L7.3 0.5 L3.8 4.5Z" fill="#000"/></svg>
<svg style="left:366px;top:173px" width="32" height="16" viewBox="0 0 32 16" ><rect x="1.5" y="1.5" width="29" height="12.5" rx="1.5" fill="#e6e6e6" stroke="#3c4a66" stroke-width="1.3"/><rect x="4" y="5" width="16" height="6" rx="3" fill="#4aa040"/><rect x="19.5" y="2.8" width="9.5" height="10" rx="1" fill="#b8b8b8" stroke="#3c4a66" stroke-width="1.2"/></svg>
<svg style="left:364px;top:218px" width="9" height="6" viewBox="0 0 9 6" ><path d="M0.8 0.8 L4.5 4.5 L8.2 0.8" fill="none" stroke="#2f5d9e" stroke-width="1.2"/></svg>
<svg style="left:369px;top:598px" width="9" height="17" viewBox="0 0 9 17" ><path d="M4.5 4 L4.5 15.5" stroke="#a0a0a0" stroke-width="1.3"/><path d="M4.5 1 L8.2 6.5 L0.8 6.5Z" fill="#a0a0a0"/></svg>
<svg style="left:392px;top:598px" width="9" height="17" viewBox="0 0 9 17" ><path d="M4.5 1 L4.5 12.5" stroke="#a0a0a0" stroke-width="1.3"/><path d="M4.5 15.5 L8.2 10 L0.8 10Z" fill="#a0a0a0"/></svg>
<svg style="left:411px;top:598px" width="18" height="17" viewBox="0 0 18 17" ><rect x="1.5" y="1.5" width="7" height="14" fill="none" stroke="#8a8a8a" stroke-width="0.9" stroke-dasharray="1.6 1.2"/><rect x="8.5" y="1.5" width="7" height="14" fill="#dcdcdc" stroke="#8a8a8a" stroke-width="0.9"/><path d="M4 8.5 L12 8.5" stroke="#8a8a8a" stroke-width="1"/><path d="M13 8.5 L10.5 6.3 L10.5 10.7Z" fill="#8a8a8a"/></svg>
<svg style="left:433px;top:605px" width="8" height="5" viewBox="0 0 8 5" ><path d="M0.3 0.3 L7.3 0.3 L3.8 4.3Z" fill="#444"/></svg>
<svg style="left:452px;top:598px" width="17" height="17" viewBox="0 0 17 17" ><rect x="1" y="3.2" width="1.6" height="1.6" fill="#dadada"/><rect x="3.5" y="3.2" width="5" height="1.6" fill="#dadada"/><rect x="1" y="8.2" width="1.6" height="1.6" fill="#999"/><rect x="3.5" y="8.2" width="11" height="1.6" fill="#999"/><rect x="1" y="13" width="1.6" height="1.6" fill="#dadada"/><rect x="3.5" y="13" width="11" height="1.6" fill="#dadada"/><path d="M12 1 v6.4 M8.8 4.2 h6.4" stroke="#999" stroke-width="1.7"/></svg>
<svg style="left:475px;top:598px" width="17" height="17" viewBox="0 0 17 17" ><rect x="1" y="2.2" width="1.6" height="1.6" fill="#999"/><rect x="3.5" y="2.2" width="11" height="1.6" fill="#aaa"/><rect x="1" y="7.2" width="1.6" height="1.6" fill="#999"/><rect x="3.5" y="7.2" width="11" height="1.6" fill="#aaa"/><rect x="1" y="12.2" width="1.6" height="1.6" fill="#999"/><rect x="3.5" y="12.2" width="4.5" height="1.6" fill="#999"/><path d="M10.2 9.8 L15 14.8 M15 9.8 L10.2 14.8" stroke="#888" stroke-width="0.9"/></svg>
<svg style="left:499px;top:598px" width="14" height="18" viewBox="0 0 14 18" ><path d="M2 1.5 L6 8" stroke="#7a7a7a" stroke-width="1.4"/><path d="M5 7.5 Q7.5 6.5 8.5 9 L12 15 Q9 16.5 6 14 Q4.5 11 5 7.5Z" fill="#f0a040"/><path d="M6.8 10 L8.5 14 M8.5 9.5 L10 14" stroke="#f8d090" stroke-width="0.7"/></svg>
<svg style="left:520px;top:600px" width="18" height="14" viewBox="0 0 18 14" ><path d="M1 1 L6 1 L7 2.5 L13 2.5 L13 5 L5 5 L1 12.5Z" fill="#f0a040"/><path d="M5.5 6 L17 6 L13 13 L2 13Z" fill="#f0a040"/></svg>
<svg style="left:542px;top:605px" width="8" height="5" viewBox="0 0 8 5" ><path d="M0.3 0.3 L7.3 0.3 L3.8 4.3Z" fill="#111"/></svg>
<svg style="left:562px;top:599px" width="16" height="16" viewBox="0 0 16 16" ><path d="M1 1 L14 1 L15 2 L15 15 L2 15 L1 14Z" fill="#fff" stroke="#3a8ad4" stroke-width="1.2"/><rect x="3.5" y="1.5" width="9" height="6" fill="#fff" stroke="#3a8ad4" stroke-width="1.2"/><rect x="5" y="10.5" width="6" height="4" fill="#fff" stroke="#3a8ad4" stroke-width="1.2"/></svg>
<svg style="left:584px;top:598px" width="18" height="18" viewBox="0 0 18 18" ><path d="M9 5 L1 5 L1 13 L9 13 M12 5 L16 5 L16 13 L12 13" fill="none" stroke="#9a9a9a" stroke-width="1"/><rect x="3" y="7.8" width="1.8" height="2.4" fill="#9a9a9a"/><rect x="5.5" y="7.8" width="1.8" height="2.4" fill="#9a9a9a"/><path d="M10.5 1 L10.5 17 M8.5 1 h4 M8.5 17 h4" stroke="#9a9a9a" stroke-width="1"/></svg>
<svg style="left:606px;top:605px" width="8" height="5" viewBox="0 0 8 5" ><path d="M0.3 0.3 L7.3 0.3 L3.8 4.3Z" fill="#555"/></svg>

<div class="a" style="left:363px;top:619px;line-height:18px">Name:</div>
<div class="a" style="left:363px;top:641px;width:614px;height:18px;background:#f9fafd;border:1px solid #e0e0e0"></div>
<div class="a" style="left:363px;top:664px;line-height:18px;letter-spacing:-0.3px">Expression:</div>
<div class="a" style="left:363px;top:686px;width:614px;height:100px;background:#f9fafd;border:1px solid #d8d8d8;border-bottom:3px solid #d4d4d4"></div>
<div class="a" style="left:363px;top:791px;line-height:18px">Description:</div>
<div class="a" style="left:363px;top:813px;width:614px;height:18px;background:#f9fafd;border:1px solid #e0e0e0"></div>

</body></html>
